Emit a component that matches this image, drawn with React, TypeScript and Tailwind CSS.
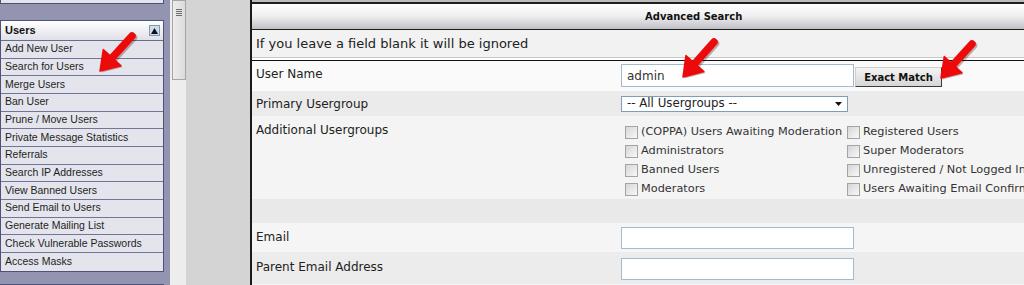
import React from "react";

const menu = [
  "Add New User",
  "Search for Users",
  "Merge Users",
  "Ban User",
  "Prune / Move Users",
  "Private Message Statistics",
  "Referrals",
  "Search IP Addresses",
  "View Banned Users",
  "Send Email to Users",
  "Generate Mailing List",
  "Check Vulnerable Passwords",
  "Access Masks",
];

const groups1 = ["(COPPA) Users Awaiting Moderation", "Administrators", "Banned Users", "Moderators"];
const groups2 = ["Registered Users", "Super Moderators", "Unregistered / Not Logged In", "Users Awaiting Email Confirmation"];

function Arrow({ tail, tip }: { tail: [number, number]; tip: [number, number] }) {
  const dx = tip[0] - tail[0];
  const dy = tip[1] - tail[1];
  const len = Math.hypot(dx, dy);
  const ux = dx / len;
  const uy = dy / len;
  const hl = 18;
  const hw = 12;
  const bx = tip[0] - ux * hl;
  const by = tip[1] - uy * hl;
  const nx = -uy;
  const ny = ux;
  const pts = `${tip[0]},${tip[1]} ${bx + nx * hw},${by + ny * hw} ${bx - nx * hw},${by - ny * hw}`;
  const shadowPts = `${tip[0] + 1.5},${tip[1] + 1.5} ${bx + nx * hw + 1.5},${by + ny * hw + 1.5} ${bx - nx * hw + 1.5},${by - ny * hw + 1.5}`;
  return (
    <g>
      <line x1={tail[0] + 1.5} y1={tail[1] + 1.5} x2={bx + ux * 3 + 1.5} y2={by + uy * 3 + 1.5} stroke="rgba(60,0,0,0.3)" strokeWidth={7.5} strokeLinecap="round" />
      <polygon points={shadowPts} fill="rgba(60,0,0,0.3)" />
      <line x1={tail[0]} y1={tail[1]} x2={bx + ux * 3} y2={by + uy * 3} stroke="#ec0a0a" strokeWidth={7.5} strokeLinecap="round" />
      <polygon points={pts} fill="#ec0a0a" stroke="#ec0a0a" strokeWidth={1.5} strokeLinejoin="round" />
    </g>
  );
}

function Check() {
  return <span className="inline-block w-[13px] h-[13px] shrink-0 border border-[#a4a4a4] bg-linear-to-br from-[#d6d6d6] to-[#f8f8f8]" />;
}

export default function App() {
  return (
    <div className="relative w-[1024px] h-[285px] overflow-hidden flex bg-[#d5d5d5]">
      {/* Sidebar */}
      <div className="w-[170px] shrink-0 bg-[#9394b0] flex flex-col font-['Liberation_Sans',Arial,sans-serif] text-[#1e1e1e]">
        <div className="w-[164px] h-[4px] bg-[#e4e4ec] border-b border-r border-l border-[#4f5277]" />
        <div className="h-[16px] shrink-0" />
        <div className="w-[164px] shrink-0 border border-[#4f5277] bg-[#e4e4ec]">
          <div className="h-[20px] flex items-center justify-between pl-[4px] pr-[3px] bg-linear-to-b from-white to-[#e0e0e8] border-b border-[#6a6c8c]">
            <span className="font-bold text-[11px] text-[#111]">Users</span>
            <span className="w-[11px] h-[11px] flex items-center justify-center bg-[#cfdcec] border border-[#7c9ab8]">
              <svg width="7" height="6" viewBox="0 0 7 6">
                <polygon points="3.5,0 7,6 0,6" fill="#111" />
              </svg>
            </span>
          </div>
          {menu.map((m, i) => (
            <div
              key={m}
              className={`h-[17.66px] flex items-center pl-[4px] text-[10.5px] whitespace-nowrap ${i < menu.length - 1 ? "border-b border-[#72749a]" : ""}`}
            >
              {m}
            </div>
          ))}
        </div>
        <div className="h-[12px] shrink-0" />
        <div className="w-[164px] flex-1 bg-[#e4e4ec] border-t border-l border-r border-[#4f5277]" />
      </div>

      {/* Scrollbar */}
      <div className="w-[16px] shrink-0 bg-[#ededed] flex flex-col">
        <div className="ml-[2px] w-[14px] h-[80px] bg-linear-to-r from-[#ececec] to-[#dcdcdc] border border-[#a6a6a6] flex flex-col items-center pt-[8px] gap-[1px]">
          <span className="w-[6px] h-[1px] bg-[#6c6c6c]" />
          <span className="w-[6px] h-[1px] bg-[#6c6c6c]" />
          <span className="w-[6px] h-[1px] bg-[#6c6c6c]" />
          <span className="w-[6px] h-[1px] bg-[#6c6c6c]" />
        </div>
      </div>

      {/* Gap */}
      <div className="w-[64px] shrink-0 bg-[#d4d4d4]" />

      {/* Main panel */}
      <div className="flex-1 min-w-0 overflow-hidden border-l-2 border-[#1a1a1a] bg-[#f4f4f4] flex flex-col font-['DejaVu_Sans',Verdana,sans-serif] text-[#222] whitespace-nowrap">
        <div className="h-[2px] shrink-0 bg-[#bcbcbc]" />
        <div className="h-[28px] shrink-0 border-t-2 border-b border-[#1e1e1e] bg-linear-to-b from-white via-[#eeeef0] to-[#bfbfc6] flex items-center pl-[393px]">
          <span className="font-bold text-[10px] text-[#111]">Advanced Search</span>
        </div>
        <div className="h-[28px] shrink-0 bg-[#f2f2f2] border-b border-[#c8c8c8] flex items-center pl-[4px] text-[13px]">
          If you leave a field blank it will be ignored
        </div>
        <div className="h-[2px] shrink-0 bg-white" />
        <div className="h-[1px] shrink-0 bg-[#111]" />

        {/* User Name */}
        <div className="h-[30px] shrink-0 flex bg-[#fafafa]">
          <div className="w-[369px] shrink-0 pl-[4px] pt-[4px] text-[12px]">User Name</div>
          <div className="pt-[3px] flex items-start">
            <div className="w-[233px] h-[23px] bg-white border border-[#a5b9cf] flex items-center pl-[5px] text-[12px] text-[#333]">admin</div>
            <button className="ml-[1px] mt-[3px] w-[87px] h-[20px] bg-linear-to-b from-[#f4f4f4] to-[#d6d6d6] border border-t-[#cfcfcf] border-l-[#cfcfcf] border-r-[#3a3a3a] border-b-[#3a3a3a] font-bold text-[10px] text-[#111] flex items-center justify-center">
              Exact Match
            </button>
          </div>
        </div>

        {/* Primary Usergroup */}
        <div className="h-[25px] shrink-0 flex items-center bg-[#ebebeb]">
          <div className="w-[369px] shrink-0 pl-[4px] text-[12px]">Primary Usergroup</div>
          <div className="w-[227px] h-[16px] bg-white border border-[#7f9db9] flex items-center justify-between pl-[5px] pr-[5px] text-[11.8px] text-[#222]">
            <span>-- All Usergroups --</span>
            <svg width="7" height="4" viewBox="0 0 7 4">
              <polygon points="0,0 7,0 3.5,4" fill="#111" />
            </svg>
          </div>
        </div>

        {/* Additional Usergroups */}
        <div className="h-[83px] shrink-0 flex bg-[#f4f4f4]">
          <div className="w-[369px] shrink-0 pl-[4px] pt-[5px] text-[12px]">Additional Usergroups</div>
          <div className="pt-[7px] pl-[4px] flex text-[11.3px] text-[#333]">
            <div className="w-[222px] flex flex-col">
              {groups1.map((g) => (
                <div key={g} className="h-[19px] flex items-center gap-[3px]">
                  <Check />
                  <span>{g}</span>
                </div>
              ))}
            </div>
            <div className="flex flex-col">
              {groups2.map((g) => (
                <div key={g} className="h-[19px] flex items-center gap-[3px]">
                  <Check />
                  <span>{g}</span>
                </div>
              ))}
            </div>
          </div>
        </div>

        <div className="h-[24px] shrink-0 bg-[#e9e9e9]" />

        {/* Email */}
        <div className="h-[29px] shrink-0 flex bg-[#f5f5f5]">
          <div className="w-[369px] shrink-0 pl-[4px] pt-[5px] text-[12px]">Email</div>
          <div className="pt-[4px]">
            <div className="w-[233px] h-[22px] bg-white border border-[#a5b9cf]" />
          </div>
        </div>

        {/* Parent Email */}
        <div className="h-[32px] shrink-0 flex bg-[#ececec]">
          <div className="w-[369px] shrink-0 pl-[4px] pt-[6px] text-[12px]">Parent Email Address</div>
          <div className="pt-[6px]">
            <div className="w-[233px] h-[22px] bg-white border border-[#a5b9cf]" />
          </div>
        </div>
      </div>

      {/* Annotation arrows */}
      <svg className="absolute inset-0 pointer-events-none" width="1024" height="285" viewBox="0 0 1024 285">
        <Arrow tail={[132, 36]} tip={[100, 71]} />
        <Arrow tail={[714, 42]} tip={[683, 77]} />
        <Arrow tail={[972, 44]} tip={[941, 78]} />
      </svg>
    </div>
  );
}
